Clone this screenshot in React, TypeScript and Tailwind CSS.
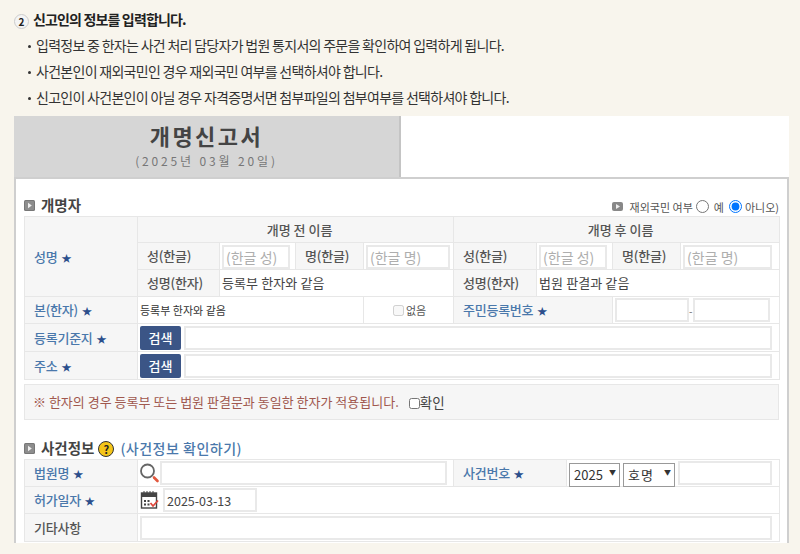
const FONT = '[font-family:"Noto_Sans_CJK_KR","Noto_Sans",sans-serif]';

function Star() {
  return <span className="ml-[4px] text-[10px] text-[#2c4f8c]">★</span>;
}

function SectionIcon() {
  return (
    <svg width="11" height="11" viewBox="0 0 11 11" className="shrink-0">
      <rect width="11" height="11" rx="1.5" fill="#777" />
      <rect x="1" y="1" width="9" height="9" rx="1" fill="#8d8d8d" />
      <path d="M4 2.8 L7.8 5.5 L4 8.2 Z" fill="#eee" />
    </svg>
  );
}

function TextBox({ className = '', placeholder, value }: { className?: string; placeholder?: string; value?: string }) {
  return (
    <input
      readOnly
      placeholder={placeholder}
      value={value}
      className={`h-[24px] border-2 border-[#e9e9e9] bg-white px-[2px] text-[#444] outline-none placeholder:text-[#aeaeae] ${className}`}
    />
  );
}

function LabelCell({ text, rowSpan, colSpan }: { text: string; rowSpan?: number; colSpan?: number }) {
  return (
    <th rowSpan={rowSpan} colSpan={colSpan} className="border border-[#e7e7e7] bg-[#f6f6f6] pl-[9px] text-left text-[13px] font-medium tracking-[-0.25px] text-[#4a78ab]">
      {text}
      <Star />
    </th>
  );
}

function SubLabel({ text }: { text: string }) {
  return (
    <th className="border border-[#e7e7e7] bg-[#f6f6f6] pl-[9px] text-left text-[13px] font-medium tracking-[-0.2px] text-[#555]">{text}</th>
  );
}

function Cell({ children, colSpan, className = '' }: { children?: React.ReactNode; colSpan?: number; className?: string }) {
  return (
    <td colSpan={colSpan} className={`border border-[#e7e7e7] bg-white px-[2px] py-0 ${className}`}>
      {children}
    </td>
  );
}

function SearchButton() {
  return (
    <button className="h-[24px] w-[41px] shrink-0 rounded-[2px] bg-[#3b5586] text-[13px] font-medium text-white">검색</button>
  );
}

function AddressRow({ label }: { label: string }) {
  return (
    <tr className="h-[28px]">
      <LabelCell text={label} />
      <Cell colSpan={8}>
        <div className="flex items-center gap-[3px]">
          <SearchButton />
          <TextBox className="w-[588px]" />
        </div>
      </Cell>
    </tr>
  );
}

function SelectBox({ label, className = '' }: { label: string; className?: string }) {
  return (
    <span className="relative block h-[24px]">
      <select className={`h-[24px] appearance-none border border-[#999] bg-white pl-[4px] text-[13px] text-[#333] ${className}`}>
        <option>{label}</option>
      </select>
      <span className="pointer-events-none absolute right-[4px] top-[6px] text-[7px] text-[#333]">▼</span>
    </span>
  );
}

function MagnifierIcon() {
  return (
    <svg width="20" height="20" viewBox="0 0 20 20" className="shrink-0">
      <circle cx="7.5" cy="8" r="6.5" fill="none" stroke="#666" strokeWidth="1.8" />
      <path d="M14 14.5 L17.5 18" stroke="#e2583e" strokeWidth="2.6" strokeLinecap="round" />
    </svg>
  );
}

function CalendarIcon() {
  return (
    <svg width="20" height="20" viewBox="0 0 20 20" className="shrink-0">
      <rect x="1.5" y="3" width="15" height="15" fill="none" stroke="#444" strokeWidth="1.4" />
      <rect x="1.5" y="3" width="15" height="4" fill="#444" />
      <path d="M4 1v3M7 1v3M10 1v3M13 1v3" stroke="#444" strokeWidth="1" />
      <path d="M4 10h2v2H4zM7.5 10h2v2h-2zM4 13.5h2v2H4zM7.5 13.5h2v2h-2z" fill="#444" />
      <path d="M10.5 13 L13 16 L18 10.5" fill="none" stroke="#e0463a" strokeWidth="1.8" />
    </svg>
  );
}

const bullets = [
  '입력정보 중 한자는 사건 처리 담당자가 법원 통지서의 주문을 확인하여 입력하게 됩니다.',
  '사건본인이 재외국민인 경우 재외국민 여부를 선택하셔야 합니다.',
  '신고인이 사건본인이 아닐 경우 자격증명서면 첨부파일의 첨부여부를 선택하셔야 합니다.',
];

export default function App() {
  return (
    <div className={`h-[554px] w-[800px] overflow-hidden bg-[#f8f5ed] pl-[14px] ${FONT}`}>
      <div className="flex h-[116px] flex-col pt-[8px]">
        <div className="flex h-[23px] items-center gap-[4px]">
          <span className="mt-[3px] flex h-[15px] w-[15px] items-center justify-center rounded-full border border-[#ccc] bg-[#f4f4f4] text-[10px] font-bold text-[#222]">2</span>
          <span className="text-[14px] font-bold tracking-[-0.85px] text-[#222]">신고인의 정보를 입력합니다.</span>
        </div>
        <ul className="mt-[1px] pl-[14px]">
          {bullets.map((b) => (
            <li key={b} className="flex h-[26px] items-center gap-[5px] text-[14px] tracking-[-0.71px] text-[#333]">
              <span className="mt-[2px] h-[3px] w-[3px] rounded-full bg-[#333]" />
              {b}
            </li>
          ))}
        </ul>
      </div>

      <div className="w-[775px] bg-white">
        <div className="flex h-[61px] w-[387px] flex-col items-center border-r-2 border-[#c4c4c4] bg-[#d6d6d6] pt-[3px]">
          <div className="h-[32px] text-[22px] font-bold leading-[32px] tracking-[2.5px] text-[#444]">개명신고서</div>
          <div className="text-[12px] leading-[20px] tracking-[2.85px] text-[#777]">(2025년 03월 20일)</div>
        </div>

        <div className="h-[366px] overflow-hidden border-x-2 border-t-2 border-[#cfcfcf] bg-white pl-[8px]">
          <div className="flex h-[37px] w-[755px] items-end justify-between">
            <div className="flex items-center gap-[6px]">
              <SectionIcon />
              <span className="text-[14.5px] font-bold text-[#444]">개명자</span>
            </div>
            <div className="flex items-center pb-[1px] text-[11px] text-[#555]">
              <svg width="11" height="9" viewBox="0 0 11 9" className="mr-[7px]">
                <rect width="11" height="9" rx="2" fill="#888" />
                <path d="M4 2 L8 4.5 L4 7 Z" fill="#eee" />
              </svg>
              재외국민 여부
              <input type="radio" readOnly name="abroad" checked={false} className="ml-[3px] mr-[5px] h-[13px] w-[13px]" />
              예
              <input type="radio" readOnly name="abroad" checked className="ml-[5px] mr-[3px] h-[13px] w-[13px]" />
              아니오)
            </div>
          </div>

          <table className="w-[755px] table-fixed border-collapse">
            <colgroup>
              <col className="w-[113px]" />
              <col className="w-[82px]" />
              <col className="w-[76px]" />
              <col className="w-[68px]" />
              <col className="w-[90px]" />
              <col className="w-[83px]" />
              <col className="w-[76px]" />
              <col className="w-[68px]" />
              <col className="w-[99px]" />
            </colgroup>
            <tbody>
              <tr className="h-[26px]">
                <LabelCell text="성명" rowSpan={3} />
                <th colSpan={4} className="border border-[#e7e7e7] bg-[#f6f6f6] pl-[8px] text-center text-[13px] font-medium text-[#555]">개명 전 이름</th>
                <th colSpan={4} className="border border-[#e7e7e7] bg-[#f6f6f6] pl-[8px] text-center text-[13px] font-medium text-[#555]">개명 후 이름</th>
              </tr>
              <tr className="h-[27px]">
                <SubLabel text="성(한글)" />
                <Cell><TextBox className="w-[68px] text-[14px]" placeholder="(한글 성)" /></Cell>
                <SubLabel text="명(한글)" />
                <Cell><TextBox className="w-[84px] text-[14px]" placeholder="(한글 명)" /></Cell>
                <SubLabel text="성(한글)" />
                <Cell><TextBox className="w-[68px] text-[14px]" placeholder="(한글 성)" /></Cell>
                <SubLabel text="명(한글)" />
                <Cell><TextBox className="w-[89px] text-[14px]" placeholder="(한글 명)" /></Cell>
              </tr>
              <tr className="h-[27px]">
                <SubLabel text="성명(한자)" />
                <Cell colSpan={3} className="text-[13px] tracking-[0.1px] text-[#444]">등록부 한자와 같음</Cell>
                <SubLabel text="성명(한자)" />
                <Cell colSpan={3} className="text-[13px] tracking-[0.1px] text-[#444]">법원 판결과 같음</Cell>
              </tr>
              <tr className="h-[27px]">
                <LabelCell text="본(한자)" />
                <Cell colSpan={3} className="text-[11px] text-[#333]">등록부 한자와 같음</Cell>
                <Cell className="text-[11px] text-[#555]">
                  <div className="flex items-center pl-[27px]">
                    <input type="checkbox" readOnly checked={false} disabled className="mr-[2px] h-[11px] w-[11px]" />
                    없음
                  </div>
                </Cell>
                <LabelCell text="주민등록번호" colSpan={2} />
                <td colSpan={2} className="border border-[#e7e7e7] bg-white p-0 pl-[2px]">
                  <div className="flex items-center">
                    <TextBox className="w-[74px]" />
                    <span className="text-[10px] text-[#666]">-</span>
                    <TextBox className="w-[77px]" />
                  </div>
                </td>
              </tr>
              <AddressRow label="등록기준지" />
              <AddressRow label="주소" />
            </tbody>
          </table>

          <div className="mt-[4px] flex h-[36px] w-[755px] items-center border border-[#e7e7e7] bg-[#f6f6f6] pl-[8px] text-[13px] text-[#a0584e]">
            ※ 한자의 경우 등록부 또는 법원 판결문과 동일한 한자가 적용됩니다.
            <input type="checkbox" readOnly checked={false} className="ml-[10px] mt-[3px] h-[11px] w-[11px]" />
            <span className="text-[13.5px] text-[#444]">확인</span>
          </div>

          <div className="mt-[17px] flex h-[22px] items-center">
            <SectionIcon />
            <span className="ml-[6px] text-[14.5px] font-bold text-[#444]">사건정보</span>
            <span className="ml-[4px] mt-[2px] flex h-[16px] w-[16px] items-center justify-center rounded-full border border-[#333] bg-[#f5c518] text-[11px] font-bold text-[#222]">?</span>
            <span className="ml-[6px] text-[14px] font-medium tracking-[0.5px] text-[#4a78ab]">(사건정보 확인하기)</span>
          </div>

          <table className="w-[755px] table-fixed border-collapse">
            <colgroup>
              <col className="w-[113px]" />
              <col className="w-[316px]" />
              <col className="w-[113px]" />
              <col className="w-[213px]" />
            </colgroup>
            <tbody>
              <tr className="h-[27px]">
                <LabelCell text="법원명" />
                <Cell>
                  <div className="flex items-center">
                    <MagnifierIcon />
                    <TextBox className="w-[287px]" />
                  </div>
                </Cell>
                <LabelCell text="사건번호" />
                <Cell>
                  <div className="flex items-center gap-[3px]">
                    <SelectBox label="2025" className="w-[51px]" />
                    <SelectBox label="호명" className="w-[52px] tracking-[1px]" />
                    <TextBox className="w-[94px]" />
                  </div>
                </Cell>
              </tr>
              <tr className="h-[27px]">
                <LabelCell text="허가일자" />
                <Cell colSpan={3}>
                  <div className="flex items-center gap-[3px]">
                    <CalendarIcon />
                    <TextBox className="w-[94px] text-[12.5px]" value="2025-03-13" />
                  </div>
                </Cell>
              </tr>
              <tr className="h-[28px]">
                <th className="border border-[#e7e7e7] bg-[#f6f6f6] pl-[9px] text-left text-[13px] font-medium tracking-[-0.25px] text-[#555]">기타사항</th>
                <Cell colSpan={3}>
                  <TextBox className="w-[632px]" />
                </Cell>
              </tr>
            </tbody>
          </table>
        </div>
      </div>
    </div>
  );
}
